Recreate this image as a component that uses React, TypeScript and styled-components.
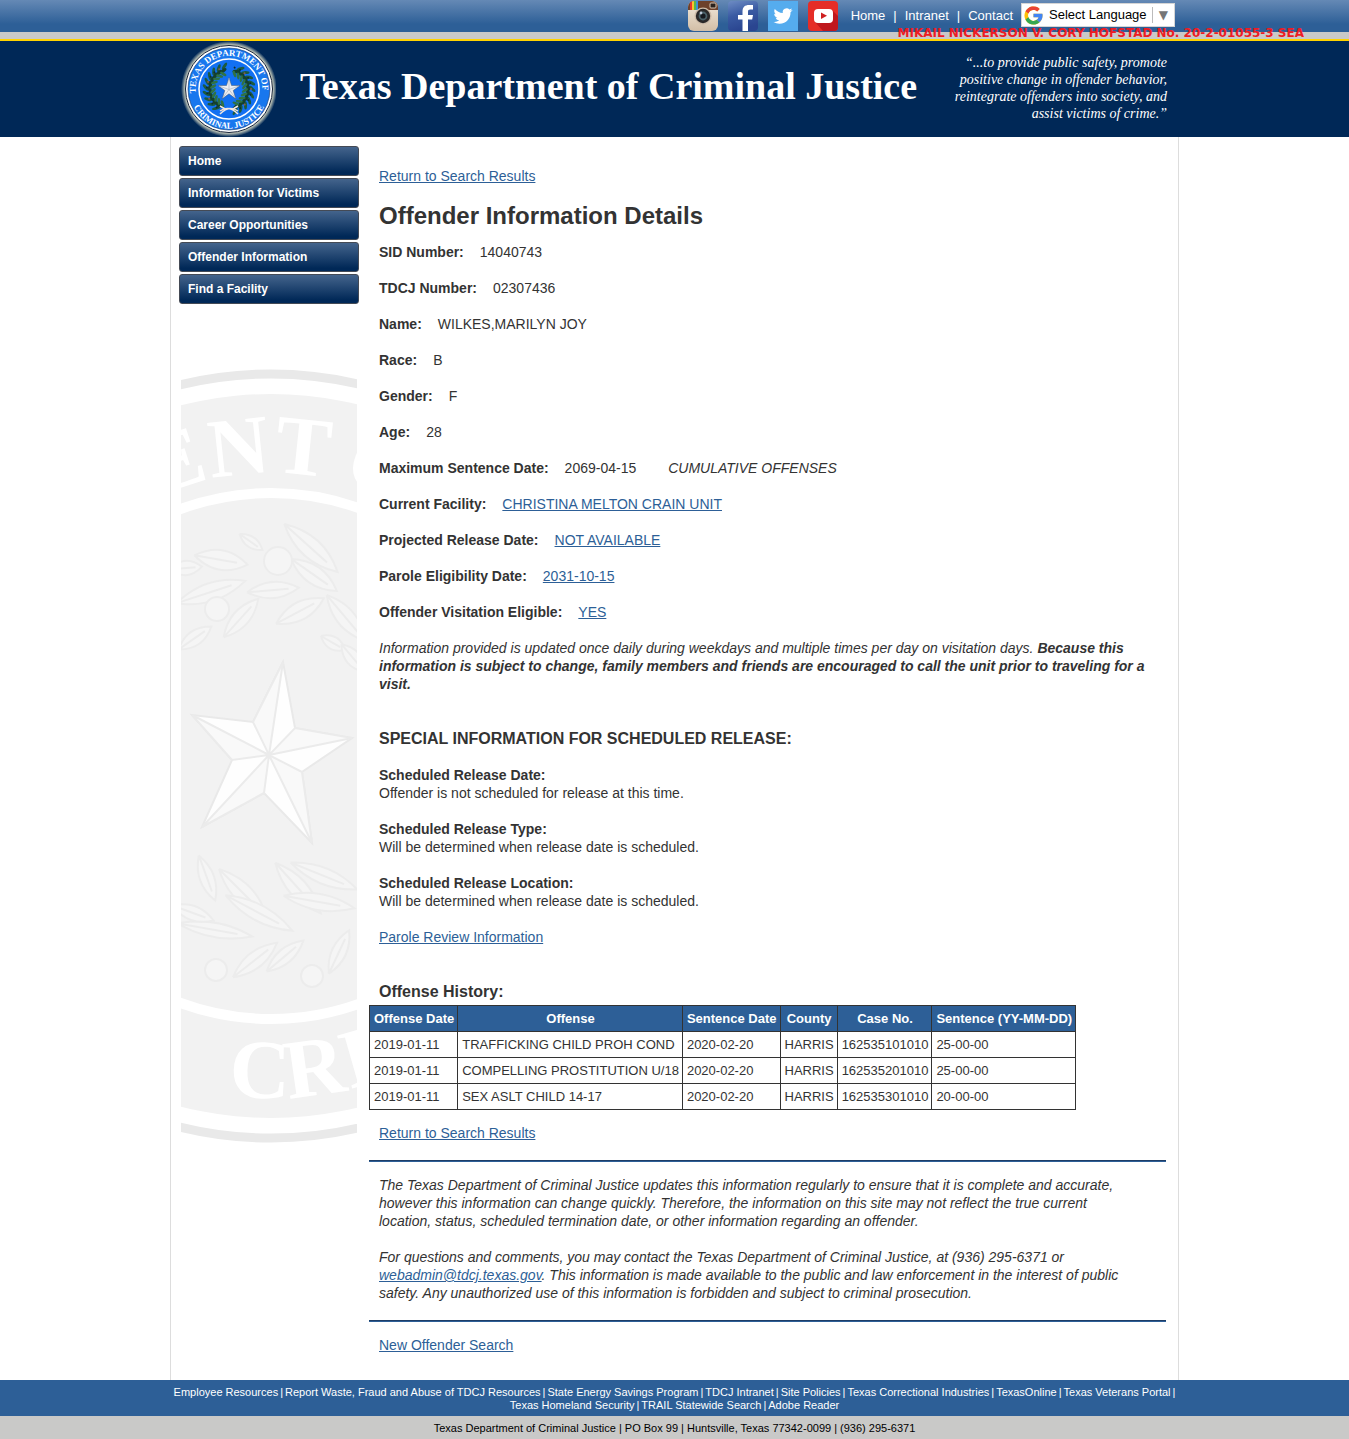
import React from "react";
import styled, { createGlobalStyle } from "styled-components";

const sans = `"Liberation Sans", Arial, Helvetica, sans-serif`;
const serif = `"Palatino Linotype", Palatino, "Liberation Serif", serif`;

const GlobalStyle = createGlobalStyle`
  body {
    margin: 0;
    background: #ffffff;
    color: #333333;
    font: 14px/18px ${sans};
  }
`;

const Container = styled.div`
  box-sizing: border-box;
  width: 100%;
  max-width: 1009px;
  margin: 0 auto;
`;

const TopBar = styled.div`
  position: relative;
  background: linear-gradient(#6589b5, #2d5f97 75%);
`;

const TopInner = styled(Container)`
  display: flex;
  justify-content: flex-end;
  align-items: center;
  height: 32px;
  padding-right: 4px;
`;

const Social = styled.div`
  display: flex;
  gap: 10px;
  margin-right: 13px;

  a,
  svg {
    display: block;
    width: 30px;
    height: 30px;
  }
`;

const TopNav = styled.nav`
  display: flex;
  gap: 8px;
  margin-right: 8px;
  color: #ffffff;
  font-size: 13px;
  line-height: 30px;

  a {
    color: inherit;
    text-decoration: none;
  }
`;

const Translate = styled.label`
  position: relative;
  z-index: 2;
  box-sizing: border-box;
  display: flex;
  align-items: center;
  width: 154px;
  height: 24px;
  margin-bottom: 2px;
  padding: 0 6px 0 2px;
  border: 1px solid #d5d5d5;
  background: #ffffff;

  select {
    flex: 1;
    min-width: 0;
    margin: 0 0 0 6px;
    padding: 0;
    border: 0;
    appearance: none;
    background: transparent;
    color: #000000;
    font: 13px/20px ${sans};
  }
`;

const Arrow = styled.span`
  padding-left: 6px;
  border-left: 1px solid #bbbbbb;
  color: #767676;
  font: 12px/16px "DejaVu Sans", sans-serif;
`;

const CaseNotice = styled.div`
  position: absolute;
  z-index: 1;
  top: 24px;
  right: 45px;
  color: #ed1c24;
  font: bold 12px/18px "DejaVu Sans", Verdana, sans-serif;
  white-space: nowrap;
`;

const Stripe = styled.div`
  height: 7px;
  border-bottom: 2px solid #ffd200;
  background: #c9c9c8;
`;

const Banner = styled.header`
  background: #002857;
`;

const BannerInner = styled(Container)`
  display: flex;
  align-items: center;
  height: 96px;
  padding: 0 12px 0 10px;
`;

const SiteTitle = styled.div`
  flex: 1;
  margin: 0 0 6px 24px;
  color: #ffffff;
  font: bold 38px/44px ${serif};
  white-space: nowrap;
`;

const Motto = styled.p`
  margin: 0 0 2px;
  color: #ffffff;
  font: italic 14px/17px ${serif};
  text-align: right;
  white-space: nowrap;
`;

const Page = styled(Container)`
  display: flex;
  align-items: flex-start;
  gap: 10px;
  padding: 9px 12px 8px 8px;
  border: solid #dddddd;
  border-width: 0 1px;
`;

const Sidebar = styled.aside`
  flex: none;
  width: 180px;

  > svg {
    display: block;
    margin: 64px auto 0;
  }
`;

const SideNav = styled.nav`
  display: flex;
  flex-direction: column;
  gap: 2px;
`;

const SideLink = styled.a`
  box-sizing: border-box;
  height: 30px;
  padding-left: 8px;
  border: 1px solid #444a55;
  border-radius: 3px;
  background: linear-gradient(#44648c, #002857 90%);
  color: #ffffff;
  font-size: 12px;
  font-weight: bold;
  line-height: 28px;
  text-decoration: none;
`;

const Main = styled.main`
  flex: 1;
  min-width: 0;
  padding-top: 21px;
`;

const Link = styled.a`
  color: #2d5f97;
`;

const Block = styled.div<{ $inset?: number }>`
  margin-bottom: 18px;
  padding: 0 ${(p) => p.$inset ?? 10}px 0 10px;
`;

const Heading = styled.h1`
  margin: 0 0 12px;
  padding: 0 10px 2px;
  font-size: 24px;
  font-weight: bold;
  line-height: 26px;
`;

const Subheading = styled.h2<{ $gap: number }>`
  margin: 36px 0 ${(p) => p.$gap}px;
  padding: 1px 10px 0;
  font-size: 16px;
  font-weight: bold;
  line-height: 18px;
`;

const Details = styled.dl`
  margin: 0 0 18px;
  padding: 0 10px;
`;

const Field = styled.div`
  display: flex;
  gap: 16px;
  margin-bottom: 18px;

  dt {
    font-weight: bold;
  }

  dd {
    margin: 0;
  }

  em {
    margin-left: 32px;
  }
`;

const History = styled.table`
  width: 707px;
  max-width: 100%;
  border-collapse: collapse;
  margin-bottom: 14px;
  font-size: 13px;
  line-height: 17px;
  white-space: nowrap;

  th,
  td {
    padding: 4px 3px 4px 4px;
    border: 1px solid #333333;
    text-align: left;
  }

  th {
    background: #2d5f97;
    color: #ffffff;
    text-align: center;
  }
`;

const Rule = styled.hr`
  height: 1px;
  margin: 0 0 14px;
  border: 0;
  border-top: 1px solid #1d3d66;
  background: #2d5f97;
`;

const FooterLinks = styled.footer`
  padding: 6px 0 4px;
  background: #2d5f97;
  color: #ffffff;
  font-size: 11px;
  line-height: 13px;
`;

const FooterRow = styled(Container)`
  display: flex;
  flex-wrap: wrap;
  justify-content: center;
  gap: 0 2px;

  a {
    color: inherit;
    text-decoration: none;
  }
`;

const Address = styled.div`
  padding: 6px 0 4px;
  background: #c9c9c8;
  color: #000000;
  font-size: 11px;
  line-height: 13px;
  text-align: center;
`;

const Instagram = () => (
  <svg viewBox="0 0 30 30" aria-hidden="true">
    <defs>
      <linearGradient id="cream" x2="0" y2="1">
        <stop offset="0" stopColor="#f3eadd" />
        <stop offset="1" stopColor="#d2bea6" />
      </linearGradient>
      <clipPath id="camera"><rect width="30" height="30" rx="6" /></clipPath>
    </defs>
    <g clipPath="url(#camera)">
      <rect width="30" height="30" fill="url(#cream)" />
      <rect width="30" height="9" fill="#6d412c" />
      <rect x="2" width="2" height="9" fill="#e8372c" />
      <rect x="4" width="2" height="9" fill="#f6c42c" />
      <rect x="6" width="2" height="9" fill="#59b54a" />
      <rect x="8" width="2" height="9" fill="#3c8fd6" />
      <rect x="22" y="2" width="6" height="5" rx="1" fill="#2b211d" stroke="#d9c6b1" strokeWidth="1" />
      <circle cx="15" cy="15" r="8.5" fill="#cdbba8" />
      <circle cx="15" cy="15" r="7.2" fill="#2a2829" />
      <circle cx="15" cy="15" r="4.4" fill="#4a6068" />
      <circle cx="15" cy="15" r="2.6" fill="#16191f" />
      <circle cx="13" cy="12" r="1.4" fill="#b9c6d6" />
    </g>
  </svg>
);

const Facebook = () => (
  <svg viewBox="0 0 30 30" aria-hidden="true">
    <defs>
      <linearGradient id="fb" x2="0.3" y2="1">
        <stop offset="0" stopColor="#6e8cc4" />
        <stop offset=".5" stopColor="#3a5ba3" />
        <stop offset="1" stopColor="#2a4590" />
      </linearGradient>
    </defs>
    <rect width="30" height="30" rx="4" fill="url(#fb)" />
    <path d="M14.500 30V18.500H10V14h4.500v-3.500C14.500 6 17 4 21 4h4v4.600h-2.700c-1.700 0-2.300.8-2.300 2.400v3h5L24.200 18.500H20V30z" fill="#fff" />
  </svg>
);

const Twitter = () => (
  <svg viewBox="0 0 30 30" aria-hidden="true">
    <rect width="30" height="30" fill="#55acee" />
    <path
      transform="translate(5.500 5.500) scale(.79)"
      fill="#fff"
      d="M23.950 4.570a10 10 0 0 1-2.820.77 4.960 4.960 0 0 0 2.160-2.720c-.95.550-2 .95-3.130 1.180a4.920 4.920 0 0 0-8.380 4.480C7.690 8.100 4.070 6.130 1.640 3.160a4.820 4.820 0 0 0-.67 2.480c0 1.710.87 3.210 2.190 4.100a4.900 4.900 0 0 1-2.230-.62v.06a4.920 4.920 0 0 0 3.950 4.830 5 5 0 0 1-2.210.08 4.940 4.940 0 0 0 4.600 3.420A9.870 9.870 0 0 1 0 19.540a13.990 13.990 0 0 0 7.550 2.210c9.050 0 14-7.500 14-13.980 0-.21 0-.42-.02-.63a9.940 9.940 0 0 0 2.460-2.550z"
    />
  </svg>
);

const YouTube = () => (
  <svg viewBox="0 0 30 30" aria-hidden="true">
    <defs><clipPath id="yt"><rect width="30" height="30" rx="4" /></clipPath></defs>
    <g clipPath="url(#yt)">
      <rect width="30" height="30" fill="#e52d27" />
      <path d="M24 9L30 15V30H15L7 21z" fill="#bf171d" />
      <rect x="6" y="8" width="19" height="14" rx="4" fill="#fff" />
      <path d="M13 11.500v6.500l6-3.200z" fill="#ce1f20" />
    </g>
  </svg>
);

const GoogleG = () => (
  <svg width="19" height="19" viewBox="3 3 42 42" aria-hidden="true">
    <path fill="#ffc107" d="M43.600 20H24v8h11.300C33.700 32.700 29.200 36 24 36c-6.600 0-12-5.400-12-12s5.400-12 12-12c3.100 0 5.800 1.200 8 3l5.600-5.600A20 20 0 1 0 44 24c0-1.300-.1-2.700-.4-4z" />
    <path fill="#ea4335" d="M6.300 14.700l6.600 4.800A12 12 0 0 1 24 12c3.100 0 5.800 1.200 8 3l5.600-5.600A20 20 0 0 0 6.300 14.700z" />
    <path fill="#34a853" d="M24 44c5.200 0 9.900-2 13.400-5.200l-6.200-5.200A12 12 0 0 1 12.700 28l-6.500 5A20 20 0 0 0 24 44z" />
    <path fill="#4285f4" d="M43.600 20H24v8h11.300a12 12 0 0 1-4.100 5.600l6.200 5.200C37 39.200 44 34 44 24c0-1.300-.1-2.700-.4-4z" />
  </svg>
);

// Leaf clusters of the wreath: left branch, then right branch, open at the top.
const wreathAngles = Array.from({ length: 20 }, (_, i) => (i < 10 ? 24 + i * 15 : 200 + (i - 10) * 15));

const Seal = () => (
  <svg width="96" height="96" viewBox="0 0 96 96" role="img" aria-label="Department seal">
    <defs>
      <radialGradient id="glow">
        <stop offset=".9" stopColor="#e6e6cc" />
        <stop offset="1" stopColor="#e6e6cc" stopOpacity="0" />
      </radialGradient>
      <path id="upper" d="M18 60.500A33.400 33.400 0 1 1 81 58" />
      <path id="lower" d="M10.500 57A39.500 39.500 0 0 0 87.500 57" />
    </defs>
    <circle cx="49" cy="48" r="48" fill="url(#glow)" />
    <circle cx="49" cy="48" r="43.500" fill="#fff" stroke="#16233a" strokeWidth="1" />
    <circle cx="49" cy="48" r="41" fill="#1877ee" stroke="#10356e" strokeWidth=".6" />
    <circle cx="49" cy="48" r="30" fill="#1270f2" stroke="#fff" strokeWidth="1.500" />
    <g fill="#fff" fontFamily="Liberation Serif, serif" fontWeight="bold" fontSize="9">
      <text><textPath href="#upper" startOffset="50%" textAnchor="middle">TEXAS DEPARTMENT OF</textPath></text>
      <text><textPath href="#lower" startOffset="50%" textAnchor="middle">CRIMINAL JUSTICE</textPath></text>
    </g>
    {wreathAngles.map((angle, i) => (
      <g key={angle} transform={`rotate(${angle} 49 48)`}>
        <ellipse cx="45" cy="71" rx="1.500" ry="4" transform="rotate(55 45 71)" fill="#1c5a40" />
        <ellipse cx="48" cy="67" rx="1.700" ry="4" transform="rotate(75 48 67)" fill="#14402f" />
        <ellipse cx="49" cy="64" rx="1.400" ry="3.500" transform="rotate(-40 49 64)" fill="#2f7245" />
        <circle cx="51" cy="70" r="1" fill={i % 3 ? "#0e2c2c" : "#8a5a4a"} />
      </g>
    ))}
    <path d="M40 70q9-6 18 3M58 70q-9-6-18 3M45 68l-5-3M53 68l5-3" fill="none" stroke="#f1e6e0" strokeWidth="1.500" />
    <path d="M49 36.500l2.500 8h8.500l-6.800 5 2.600 8.300-6.800-5-6.800 5 2.600-8.300-6.800-5h8.500z" fill="#eceef2" stroke="#49566b" strokeWidth=".5" />
    <path d="M49 37v11.500l6 8M49 48.500l10-3.500M49 48.500l-6 8M49 48.500l-10-3.500" fill="none" stroke="#a3abb8" strokeWidth=".6" />
  </svg>
);

// x, y, half length, half width, rotation
const leaves = [
  [40, 192, 27, 11, 10], [30, 224, 36, 10, -18], [92, 222, 26, 9, -5], [130, 180, 36, 11, 42],
  [133, 207, 28, 10, 35], [119, 243, 27, 10, -28], [60, 250, 26, 9, -48], [14, 270, 20, 8, -35],
  [165, 250, 30, 10, 50], [152, 275, 14, 7, 30], [70, 174, 14, 6, 35], [5, 200, 16, 8, -5],
  [172, 290, 18, 8, 50], [26, 510, 24, 8, 70], [62, 525, 34, 10, 45], [78, 545, 38, 9, 28],
  [117, 520, 34, 10, 48], [143, 508, 36, 9, 22], [138, 534, 36, 9, 10], [34, 562, 38, 8, 10],
  [74, 592, 28, 9, -38], [104, 588, 24, 8, -40], [158, 584, 24, 8, -65], [12, 545, 22, 8, 20],
];

const Watermark = () => (
  <svg width="176" height="776" viewBox="0 0 176 776" aria-hidden="true">
    <circle cx="90" cy="388" r="382" fill="#fff" stroke="#e9e9e9" strokeWidth="9" />
    <circle cx="90" cy="388" r="362" fill="#f2f2f2" />
    <circle cx="90" cy="388" r="263" fill="none" stroke="#fff" strokeWidth="10" />
    <g fill="#fff" fontFamily="Liberation Serif, serif" fontWeight="bold" fontSize="84" textAnchor="middle">
      {([["E", -18], ["N", -6], ["T", 6], ["O", 21]] as const).map(([c, a]) => (
        <text key={c} x="90" y="105" transform={`rotate(${a} 90 388)`}>{c}</text>
      ))}
      {([["C", 2], ["R", -8], ["I", -16]] as const).map(([c, a]) => (
        <text key={c} x="90" y="730" transform={`rotate(${a} 90 388)`}>{c}</text>
      ))}
    </g>
    <g fill="#f5f5f5" stroke="#ececec" strokeWidth="2">
      {leaves.map(([x, y, w, h, a], i) => (
        <path key={i} transform={`translate(${x} ${y}) rotate(${a})`} d={`M${-w} 0Q0 ${-h * 1.8} ${w} 0Q0 ${h * 1.8} ${-w} 0M${-w} 0H${w * 0.6}`} />
      ))}
      <circle cx="97" cy="193" r="14" />
      <circle cx="36" cy="241" r="12" />
      <circle cx="35" cy="602" r="11" />
      <circle cx="131" cy="608" r="11" />
    </g>
    <path d="M102 294L114 360 171 370 121 404 131 475 83 425 21 459 51 392 11 347 72 354z" fill="#fefefe" stroke="#e9e9e9" strokeWidth="2" />
    <path d="M88 387L102 294 72 354zM88 387L171 370 114 360zM88 387L131 475 121 404zM88 387L21 459 83 425zM88 387L11 347 51 392z" fill="#f9f9f9" stroke="#ebebeb" strokeWidth="2" />
  </svg>
);

const fields: [string, React.ReactNode][] = [
  ["SID Number:", "14040743"],
  ["TDCJ Number:", "02307436"],
  ["Name:", "WILKES,MARILYN JOY"],
  ["Race:", "B"],
  ["Gender:", "F"],
  ["Age:", "28"],
  ["Maximum Sentence Date:", <>2069-04-15<em>CUMULATIVE OFFENSES</em></>],
  ["Current Facility:", <Link href="#">CHRISTINA MELTON CRAIN UNIT</Link>],
  ["Projected Release Date:", <Link href="#">NOT AVAILABLE</Link>],
  ["Parole Eligibility Date:", <Link href="#">2031-10-15</Link>],
  ["Offender Visitation Eligible:", <Link href="#">YES</Link>],
];

const release = [
  ["Scheduled Release Date:", "Offender is not scheduled for release at this time."],
  ["Scheduled Release Type:", "Will be determined when release date is scheduled."],
  ["Scheduled Release Location:", "Will be determined when release date is scheduled."],
];

const columns = ["Offense Date", "Offense", "Sentence Date", "County", "Case No.", "Sentence (YY-MM-DD)"];

const offenses = [
  ["2019-01-11", "TRAFFICKING CHILD PROH COND", "2020-02-20", "HARRIS", "162535101010", "25-00-00"],
  ["2019-01-11", "COMPELLING PROSTITUTION U/18", "2020-02-20", "HARRIS", "162535201010", "25-00-00"],
  ["2019-01-11", "SEX ASLT CHILD 14-17", "2020-02-20", "HARRIS", "162535301010", "20-00-00"],
];

const sideLinks = ["Home", "Information for Victims", "Career Opportunities", "Offender Information", "Find a Facility"];

const footerRows = [
  ["Employee Resources", "Report Waste, Fraud and Abuse of TDCJ Resources", "State Energy Savings Program", "TDCJ Intranet", "Site Policies", "Texas Correctional Industries", "TexasOnline", "Texas Veterans Portal"],
  ["Texas Homeland Security", "TRAIL Statewide Search", "Adobe Reader"],
];

export default function App() {
  return (
    <>
      <GlobalStyle />
      <TopBar>
        <TopInner>
          <Social>
            <a href="#" aria-label="Instagram"><Instagram /></a>
            <a href="#" aria-label="Facebook"><Facebook /></a>
            <a href="#" aria-label="Twitter"><Twitter /></a>
            <a href="#" aria-label="YouTube"><YouTube /></a>
          </Social>
          <TopNav>
            <a href="#">Home</a>
            <span>|</span>
            <a href="#">Intranet</a>
            <span>|</span>
            <a href="#">Contact</a>
          </TopNav>
          <Translate>
            <GoogleG />
            <select aria-label="Language">
              <option>Select Language</option>
            </select>
            <Arrow>▼</Arrow>
          </Translate>
        </TopInner>
        <CaseNotice>MIKAIL NICKERSON V. CORY HOFSTAD No. 20-2-01055-3 SEA</CaseNotice>
      </TopBar>
      <Stripe />
      <Banner>
        <BannerInner>
          <Seal />
          <SiteTitle>Texas Department of Criminal Justice</SiteTitle>
          <Motto>
            “...to provide public safety, promote<br />
            positive change in offender behavior,<br />
            reintegrate offenders into society, and<br />
            assist victims of crime.”
          </Motto>
        </BannerInner>
      </Banner>
      <Page>
        <Sidebar>
          <SideNav>
            {sideLinks.map((t) => <SideLink key={t} href="#">{t}</SideLink>)}
          </SideNav>
          <Watermark />
        </Sidebar>
        <Main>
          <Block><Link href="#">Return to Search Results</Link></Block>
          <Heading>Offender Information Details</Heading>
          <Details>
            {fields.map(([label, value]) => (
              <Field key={label}>
                <dt>{label}</dt>
                <dd>{value}</dd>
              </Field>
            ))}
          </Details>
          <Block>
            <em>
              Information provided is updated once daily during weekdays and multiple times per day on visitation days.{" "}
              <b>Because this information is subject to change, family members and friends are encouraged to call the unit prior to traveling for a visit.</b>
            </em>
          </Block>
          <Subheading $gap={18}>SPECIAL INFORMATION FOR SCHEDULED RELEASE:</Subheading>
          {release.map(([label, value]) => (
            <Block key={label}>
              <b>{label}</b><br />
              {value}
            </Block>
          ))}
          <Block><Link href="#">Parole Review Information</Link></Block>
          <Subheading $gap={4}>Offense History:</Subheading>
          <History>
            <thead>
              <tr>{columns.map((c) => <th key={c} scope="col">{c}</th>)}</tr>
            </thead>
            <tbody>
              {offenses.map((row) => (
                <tr key={row[4]}>{row.map((cell, i) => <td key={i}>{cell}</td>)}</tr>
              ))}
            </tbody>
          </History>
          <Block><Link href="#">Return to Search Results</Link></Block>
          <Rule />
          <Block $inset={30}>
            <em>
              The Texas Department of Criminal Justice updates this information regularly to ensure that it is complete and accurate, however this information can change quickly. Therefore, the information on this site may not reflect the true current location, status, scheduled termination date, or other information regarding an offender.
            </em>
          </Block>
          <Block $inset={30}>
            <em>
              For questions and comments, you may contact the Texas Department of Criminal Justice, at (936) 295-6371 or{" "}
              <Link href="#">webadmin@tdcj.texas.gov</Link>. This information is made available to the public and law enforcement in the interest of public safety. Any unauthorized use of this information is forbidden and subject to criminal prosecution.
            </em>
          </Block>
          <Rule />
          <Block><Link href="#">New Offender Search</Link></Block>
        </Main>
      </Page>
      <FooterLinks>
        {footerRows.map((row, r) => (
          <FooterRow key={r}>
            {row.map((t, i) => (
              <React.Fragment key={t}>
                <a href="#">{t}</a>
                {(r === 0 || i < row.length - 1) && <span>|</span>}
              </React.Fragment>
            ))}
          </FooterRow>
        ))}
      </FooterLinks>
      <Address>Texas Department of Criminal Justice | PO Box 99 | Huntsville, Texas 77342-0099 | (936) 295-6371</Address>
    </>
  );
}
